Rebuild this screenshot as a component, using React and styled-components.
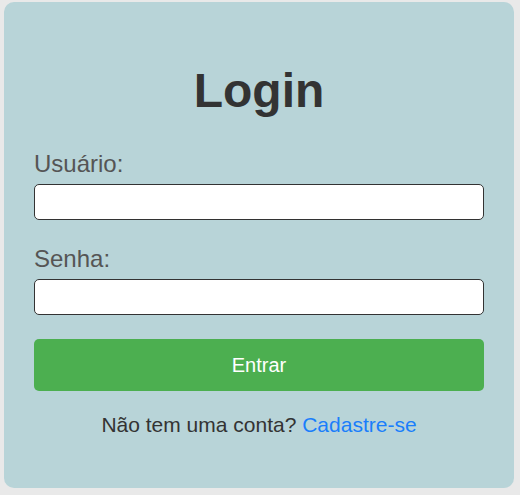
import React from "react";
import styled, { createGlobalStyle } from "styled-components";

const GlobalStyle = createGlobalStyle`
  html, body {
    margin: 0;
    padding: 0;
    background: #e9e9e9;
    font-family: "Liberation Sans", Arial, sans-serif;
  }
  * { box-sizing: border-box; }
`;

const Page = styled.div`
  padding: 2px 6px 6px 4px;
`;

const Card = styled.div`
  width: 510px;
  background: #b8d4d8;
  border-radius: 10px;
  padding: 61px 30px 51px;
`;

const Title = styled.h1`
  margin: 0 0 32px;
  font-size: 48px;
  line-height: 55px;
  font-weight: 700;
  color: #333;
  text-align: center;
`;

const Form = styled.form`
  display: flex;
  flex-direction: column;
`;

const Field = styled.div`
  display: flex;
  flex-direction: column;
  margin-bottom: ${(p) => p.$gap}px;
`;

const Label = styled.label`
  font-size: 24px;
  line-height: 28px;
  color: #555;
  margin-bottom: 6px;
`;

const Input = styled.input`
  width: 100%;
  height: 36px;
  border: 1px solid #333;
  border-radius: 5px;
  background: #fff;
  padding: 0 10px;
  font-size: 16px;
  font-family: inherit;
  outline: none;
`;

const Button = styled.button`
  height: 52px;
  border: none;
  border-radius: 5px;
  background: #4caf50;
  color: #fff;
  font-size: 20px;
  font-family: inherit;
  cursor: pointer;
`;

const Footer = styled.p`
  margin: 22px 0 0;
  font-size: 21px;
  line-height: 24px;
  color: #333;
  text-align: center;
`;

const Link = styled.a`
  color: #1a7efb;
  text-decoration: none;
`;

export default function App() {
  return (
    <>
      <GlobalStyle />
      <Page>
        <Card>
          <Title>Login</Title>
          <Form onSubmit={(e) => e.preventDefault()}>
            <Field $gap={25}>
              <Label htmlFor="user">Usuário:</Label>
              <Input id="user" type="text" />
            </Field>
            <Field $gap={24}>
              <Label htmlFor="pass">Senha:</Label>
              <Input id="pass" type="password" />
            </Field>
            <Button type="submit">Entrar</Button>
          </Form>
          <Footer>
            Não tem uma conta? <Link href="#">Cadastre-se</Link>
          </Footer>
        </Card>
      </Page>
    </>
  );
}
